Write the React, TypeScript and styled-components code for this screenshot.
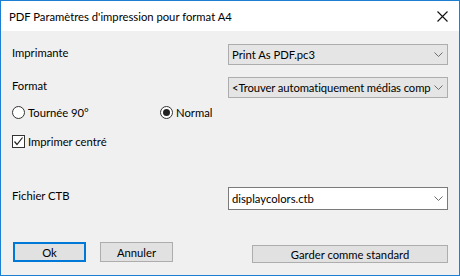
import styled, { createGlobalStyle } from 'styled-components';

const GlobalStyle = createGlobalStyle`
    html, body {
        margin: 0;
        padding: 0;
        background: #ffffff;
    }
    * {
        box-sizing: border-box;
    }
`

const font = `Lato, "Open Sans", sans-serif`

const Chevron = () => (
    <svg width="9" height="5" viewBox="0 0 9 5">
        <path d="M0.5 0.5 L4.5 4.5 L8.5 0.5" fill="none" stroke="#6d6d6d" strokeWidth="1" />
    </svg>
)

const CloseIcon = () => (
    <svg width="11" height="11" viewBox="0 0 11 11">
        <path d="M0.5 0.5 L10.5 10.5 M10.5 0.5 L0.5 10.5" stroke="#111" strokeWidth="1.1" />
    </svg>
)

export default function App() {
    return (
        <>
            <GlobalStyle />
            <Window>
                <TitleBar>
                    <Title>PDF Paramètres d'impression pour format A4</Title>
                    <CloseButton><CloseIcon /></CloseButton>
                </TitleBar>
                <Body>
                    <Field>
                        <Label>Imprimante</Label>
                        <Combo>
                            <ComboText>Print As PDF.pc3</ComboText>
                            <Chevron />
                        </Combo>
                    </Field>
                    <Field $gap={12}>
                        <Label>Format</Label>
                        <Combo>
                            <ComboText $tight>&lt;Trouver automatiquement médias comp</ComboText>
                            <Chevron />
                        </Combo>
                    </Field>
                    <OptionRow>
                        <Option $width={148}>
                            <Radio />
                            <span>Tournée 90°</span>
                        </Option>
                        <Option>
                            <Radio $checked />
                            <span>Normal</span>
                        </Option>
                    </OptionRow>
                    <OptionRow $gap={16}>
                        <Option>
                            <Checkbox>
                                <svg width="11" height="11" viewBox="0 0 11 11">
                                    <path d="M1.5 5.5 L4 8.5 L9.5 1.5" fill="none" stroke="#222" strokeWidth="1.2" />
                                </svg>
                            </Checkbox>
                            <span>Imprimer centré</span>
                        </Option>
                    </OptionRow>
                    <Field $gap={39}>
                        <Label>Fichier CTB</Label>
                        <Combo $editable>
                            <ComboText>displaycolors.ctb</ComboText>
                            <Chevron />
                        </Combo>
                    </Field>
                    <Footer>
                        <ButtonGroup>
                            <Button $default>Ok</Button>
                            <Button>Annuler</Button>
                        </ButtonGroup>
                        <Button $wide>Garder comme standard</Button>
                    </Footer>
                </Body>
            </Window>
        </>
    );
}

const Window = styled.div`
    width: 460px;
    height: 276px;
    border: 1px solid #1c7fd4;
    background: #f0f0f0;
    display: flex;
    flex-direction: column;
    font-family: ${font};
    font-size: 11.25px;
    color: #000;
`

const TitleBar = styled.div`
    height: 30px;
    background: #ffffff;
    display: flex;
    align-items: center;
    justify-content: space-between;
    padding: 0 11px 0 8px;
`

const Title = styled.div`
    font-size: 11.25px;
    color: #000;
`

const CloseButton = styled.div`
    display: flex;
    align-items: center;
`

const Body = styled.div`
    flex: 1;
    display: flex;
    flex-direction: column;
    padding: 13px 11px 0 11px;
`

const Field = styled.div<{ $gap?: number }>`
    display: flex;
    justify-content: space-between;
    align-items: flex-start;
    margin-top: ${p => p.$gap ?? 0}px;
`

const Label = styled.div`
    line-height: 15px;
    padding-top: 1px;
`

const Combo = styled.div<{ $editable?: boolean }>`
    width: 220px;
    height: ${p => p.$editable ? 23 : 21}px;
    background: ${p => p.$editable ? '#ffffff' : '#e5e5e5'};
    border: 1px solid ${p => p.$editable ? '#7a7a7a' : '#adadad'};
    display: flex;
    align-items: center;
    padding: 0 4px 0 3px;
    gap: 2px;
`

const ComboText = styled.div<{ $tight?: boolean }>`
    flex: 1;
    white-space: nowrap;
    overflow: hidden;
    letter-spacing: ${p => p.$tight ? '-0.1px' : 'normal'};
`

const OptionRow = styled.div<{ $gap?: number }>`
    display: flex;
    align-items: center;
    margin-top: ${p => p.$gap ?? 8}px;
    height: 13px;
`

const Option = styled.div<{ $width?: number }>`
    display: flex;
    align-items: center;
    gap: 3px;
    width: ${p => p.$width ? `${p.$width}px` : 'auto'};
`

const Radio = styled.div<{ $checked?: boolean }>`
    width: 13px;
    height: 13px;
    border-radius: 50%;
    border: 1px solid #333;
    background: #fff;
    position: relative;

    &::after {
        content: "";
        display: ${p => p.$checked ? 'block' : 'none'};
        position: absolute;
        top: 2px;
        left: 2px;
        width: 7px;
        height: 7px;
        border-radius: 50%;
        background: #222;
    }
`

const Checkbox = styled.div`
    width: 13px;
    height: 13px;
    border: 1px solid #333;
    background: #fff;
    display: flex;
    align-items: center;
    justify-content: center;
`

const Footer = styled.div`
    display: flex;
    justify-content: space-between;
    align-items: flex-start;
    margin-top: 32px;
    padding-left: 1px;
`

const ButtonGroup = styled.div`
    display: flex;
    gap: 14px;
`

const Button = styled.div<{ $default?: boolean; $wide?: boolean }>`
    width: ${p => p.$wide ? 196 : 73}px;
    height: ${p => p.$wide ? 18 : 20}px;
    margin-top: ${p => p.$wide ? 3 : 0}px;
    background: #e1e1e1;
    border: ${p => p.$default ? '2px solid #0078d7' : '1px solid #adadad'};
    display: flex;
    align-items: center;
    justify-content: center;
`
